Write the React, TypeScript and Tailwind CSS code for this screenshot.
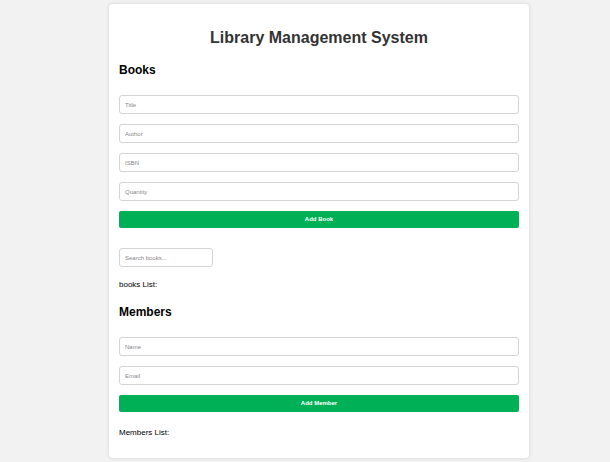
import React from 'react';

const inputCls =
  'block w-full h-[19px] px-[5px] border border-[#d4d4d4] rounded-[3px] bg-white text-[6px] text-[#333] placeholder:text-[#888] outline-none';

const btnCls =
  'block w-full h-[17px] rounded-[2px] bg-[#00b057] text-white text-[6px] font-bold';

const App = () => {
  return (
    <div className="min-h-[462px] bg-[#f2f2f2] pt-[4px] font-['Liberation_Sans',Arial,sans-serif]">
      <div className="ml-[109px] w-[420px] bg-white rounded-[4px] shadow-[0_0_4px_rgba(0,0,0,0.12)] px-[10px] pt-[24px] pb-[20px]">
        <h1 className="text-center text-[16px] leading-[20px] font-bold text-[#333]">
          Library Management System
        </h1>

        <h2 className="mt-[15px] text-[12px] leading-[14px] font-bold text-black">Books</h2>
        <div className="mt-[18px] flex flex-col gap-[10px]">
          <input className={inputCls} placeholder="Title" />
          <input className={inputCls} placeholder="Author" />
          <input className={inputCls} placeholder="ISBN" />
          <input className={inputCls} placeholder="Quantity" />
          <button className={btnCls}>Add Book</button>
        </div>
        <input className={inputCls + ' mt-[20px] !w-[94px]'} placeholder="Search books..." />
        <p className="mt-[13px] text-[8px] leading-[10px] text-black">books List:</p>

        <h2 className="mt-[15px] text-[12px] leading-[14px] font-bold text-black">Members</h2>
        <div className="mt-[18px] flex flex-col gap-[10px]">
          <input className={inputCls} placeholder="Name" />
          <input className={inputCls} placeholder="Email" />
          <button className={btnCls}>Add Member</button>
        </div>
        <p className="mt-[16px] text-[8px] leading-[10px] text-black">Members List:</p>
      </div>
    </div>
  );
};

export default App;
